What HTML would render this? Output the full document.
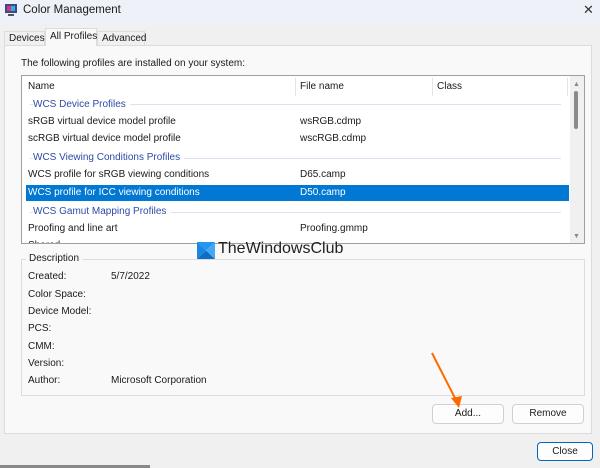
<!DOCTYPE html>
<html><head><style>
*{margin:0;padding:0;box-sizing:border-box}
body{width:600px;height:468px;overflow:hidden;background:#f0f0f0;font-family:"Liberation Sans",sans-serif;font-size:10px;color:#1a1a1a;position:relative}
.a{position:absolute;white-space:nowrap}
.title{left:0;top:0;width:600px;height:24px;background:#eef2f8}
.panel{left:4px;top:45px;width:588px;height:389px;background:#f9f9f9;border:1px solid #dcdcdc}
.list{left:21px;top:75px;width:564px;height:169px;background:#fff;border:1px solid #a0a0a0;overflow:hidden}
.grp{color:#2c4ba6;background:#fff;padding-right:4px;z-index:2}
.gl{position:absolute;height:1px;background:#dbe3f3;left:30px;width:531px}
.btn{position:absolute;background:#fdfdfd;border:1px solid #d0d0d0;border-radius:4px;text-align:center;line-height:18px}
</style></head><body>
<div class="a title"></div>
<svg class="a" style="left:4px;top:3px" width="14" height="14"><rect x="1" y="1" width="12" height="9" fill="#3a4a90"/><rect x="3" y="3" width="4" height="5" fill="#e03070"/><rect x="7" y="3" width="4" height="5" fill="#30b0e0"/><rect x="4" y="11" width="6" height="2" fill="#555"/></svg>
<div class="a" style="left:23px;top:4px;font-size:11.5px">Color Management</div>
<div class="a" style="left:583px;top:2px;font-size:13px;color:#333">✕</div>
<div class="a" style="left:4px;top:31px;width:41px;height:15px;border:1px solid #dcdcdc;border-bottom:none;background:#f0f0f0;padding-left:4px;line-height:14px">Devices</div>
<div class="a" style="left:45px;top:28px;width:52px;height:18px;border:1px solid #dcdcdc;border-bottom:none;background:#f9f9f9;padding-left:4px;line-height:16px;z-index:2">All Profiles</div>
<div class="a" style="left:97px;top:31px;width:48px;height:15px;border:1px solid #dcdcdc;border-bottom:none;background:#f0f0f0;padding-left:4px;line-height:14px">Advanced</div>
<div class="a panel"></div>
<div class="a" style="left:21px;top:58px">The following profiles are installed on your system:</div>
<div class="a list">
<div class="a" style="left:6px;top:164px">Shared...</div>
</div>
<div class="a" style="left:28px;top:81px">Name</div>
<div class="a" style="left:295px;top:78px;width:1px;height:18px;background:#e5e5e5"></div>
<div class="a" style="left:300px;top:81px">File name</div>
<div class="a" style="left:432px;top:78px;width:1px;height:18px;background:#e5e5e5"></div>
<div class="a" style="left:437px;top:81px">Class</div>
<div class="a" style="left:567px;top:78px;width:1px;height:18px;background:#e5e5e5"></div>
<div class="gl" style="top:104px"></div><div class="a grp" style="left:33px;top:99px">WCS Device Profiles</div>
<div class="a" style="left:28px;top:116px">sRGB virtual device model profile</div><div class="a" style="left:300px;top:116px">wsRGB.cdmp</div>
<div class="a" style="left:28px;top:133px">scRGB virtual device model profile</div><div class="a" style="left:300px;top:133px">wscRGB.cdmp</div>
<div class="gl" style="top:158px"></div><div class="a grp" style="left:33px;top:152px">WCS Viewing Conditions Profiles</div>
<div class="a" style="left:28px;top:169px">WCS profile for sRGB viewing conditions</div><div class="a" style="left:300px;top:169px">D65.camp</div>
<div class="a" style="left:26px;top:185px;width:543px;height:16px;background:#0078d4"></div>
<div class="a" style="left:28px;top:187px;color:#fff">WCS profile for ICC viewing conditions</div><div class="a" style="left:300px;top:187px;color:#fff">D50.camp</div>
<div class="gl" style="top:212px"></div><div class="a grp" style="left:33px;top:206px">WCS Gamut Mapping Profiles</div>
<div class="a" style="left:28px;top:223px">Proofing and line art</div><div class="a" style="left:300px;top:223px">Proofing.gmmp</div>
<div class="a" style="left:570px;top:76px;width:14px;height:167px;background:#f0f0f0"></div>
<div class="a" style="left:573px;top:81px;font-size:7px;color:#888">▲</div>
<div class="a" style="left:574px;top:91px;width:4px;height:38px;background:#8a8a8a;border-radius:2px"></div>
<div class="a" style="left:573px;top:233px;font-size:7px;color:#888">▼</div>
<svg class="a" style="left:197px;top:242px" width="18" height="17"><polygon points="0,0 18,0 9,8.5" fill="#2196f3"/><polygon points="0,17 18,17 9,8.5" fill="#0d6fc4"/><polygon points="0,0 9,8.5 0,17" fill="#1a86e0"/><polygon points="18,0 9,8.5 18,17" fill="#46a8f5"/></svg>
<div class="a" style="left:218px;top:240px;font-size:16px;color:#222">TheWindowsClub</div>
<div class="a" style="left:21px;top:259px;width:564px;height:137px;border:1px solid #dcdcdc"></div>
<div class="a" style="left:26px;top:253px;background:#f9f9f9;padding:0 3px">Description</div>
<div class="a" style="left:28px;top:271px">Created:</div><div class="a" style="left:111px;top:271px">5/7/2022</div>
<div class="a" style="left:28px;top:289px">Color Space:</div>
<div class="a" style="left:28px;top:306px">Device Model:</div>
<div class="a" style="left:28px;top:323px">PCS:</div>
<div class="a" style="left:28px;top:341px">CMM:</div>
<div class="a" style="left:28px;top:358px">Version:</div>
<div class="a" style="left:28px;top:375px">Author:</div><div class="a" style="left:111px;top:375px">Microsoft Corporation</div>
<div class="btn" style="left:432px;top:404px;width:72px;height:20px">Add...</div>
<div class="btn" style="left:512px;top:404px;width:72px;height:20px">Remove</div>
<div class="btn" style="left:537px;top:442px;width:56px;height:19px;border:1px solid #0067c0">Close</div>
<svg class="a" style="left:425px;top:350px" width="40" height="60"><line x1="7" y1="3" x2="32" y2="52" stroke="#ff6a00" stroke-width="2"/><polygon points="26,48 37,46 34,58" fill="#ff6a00"/></svg>
<div class="a" style="left:0;top:465px;width:150px;height:3px;background:#888"></div>
</body></html>
